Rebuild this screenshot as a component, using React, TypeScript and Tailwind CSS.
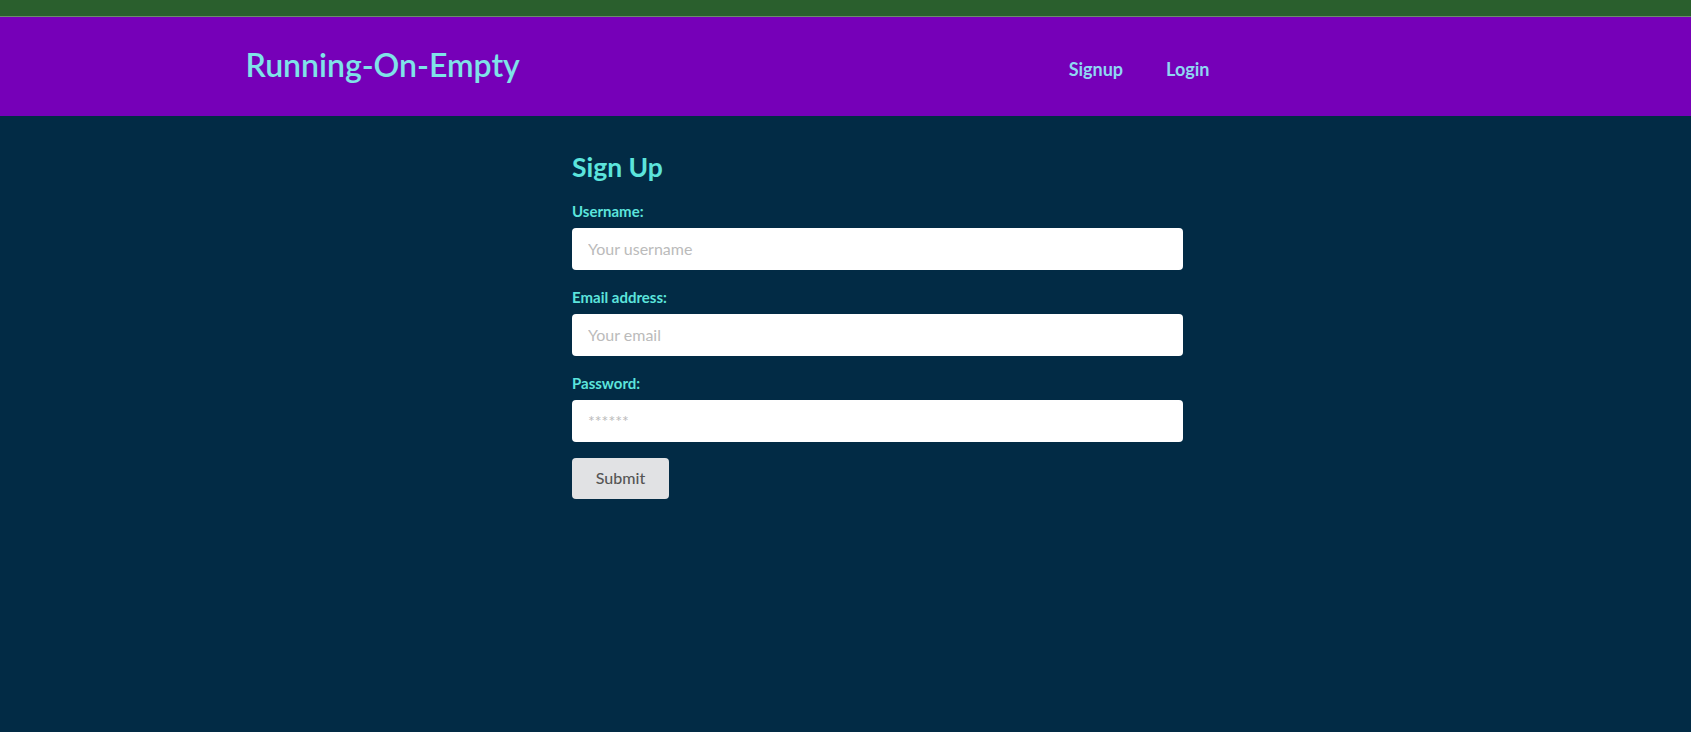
import { useState } from 'react';

export default function App() {
  const [form, setForm] = useState({ username: '', email: '', password: '' });

  const fields = [
    { key: 'username', label: 'Username:', type: 'text', placeholder: 'Your username' },
    { key: 'email', label: 'Email address:', type: 'email', placeholder: 'Your email' },
    { key: 'password', label: 'Password:', type: 'password', placeholder: '******' },
  ] as const;

  return (
    <div className="min-h-screen bg-[#022b45] font-['Lato',sans-serif]">
      {/* Top strip */}
      <div className="h-[17px] bg-[#2a5f2d] border-b border-[#6b8a6b]"></div>

      {/* Nav */}
      <nav className="h-[99px] bg-[#7600b8]">
        <div className="mx-auto w-[1200px] h-full flex items-center justify-between">
          <a href="#" className="text-[32px] font-semibold text-[#7fe3e8] leading-none -mt-[4px]">
            Running-On-Empty
          </a>
          <div className="mr-[236px] mt-[6px] flex gap-[43px] text-[18px] font-bold text-[#8fd6f2]">
            <a href="#">Signup</a>
            <a href="#">Login</a>
          </div>
        </div>
      </nav>

      {/* Sign up form */}
      <div className="ml-[572px] w-[611px] pt-[36px]">
        <h4 className="text-[26.5px] font-bold leading-[1.2] text-[#5ce4dc] mb-[17px]">Sign Up</h4>
        <form onSubmit={(e) => e.preventDefault()}>
          {fields.map((f) => (
            <div key={f.key} className="mb-[17px]">
              <label className="block text-[15px] font-bold leading-[20px] text-[#5ce4dc] mb-[7px]">{f.label}</label>
              <input
                type={f.type}
                value={form[f.key]}
                onChange={(e) => setForm({ ...form, [f.key]: e.target.value })}
                placeholder={f.placeholder}
                className="w-full h-[42px] rounded-[4px] bg-white px-[16px] text-[16px] text-[#333] placeholder:text-[#bbbbbb] outline-none"
              />
            </div>
          ))}
          <button
            type="submit"
            className="-mt-[1px] w-[97px] h-[41px] rounded-[4px] bg-[#e1e2e4] text-[16px] font-medium text-[#555]"
          >
            Submit
          </button>
        </form>
      </div>
    </div>
  );
}
